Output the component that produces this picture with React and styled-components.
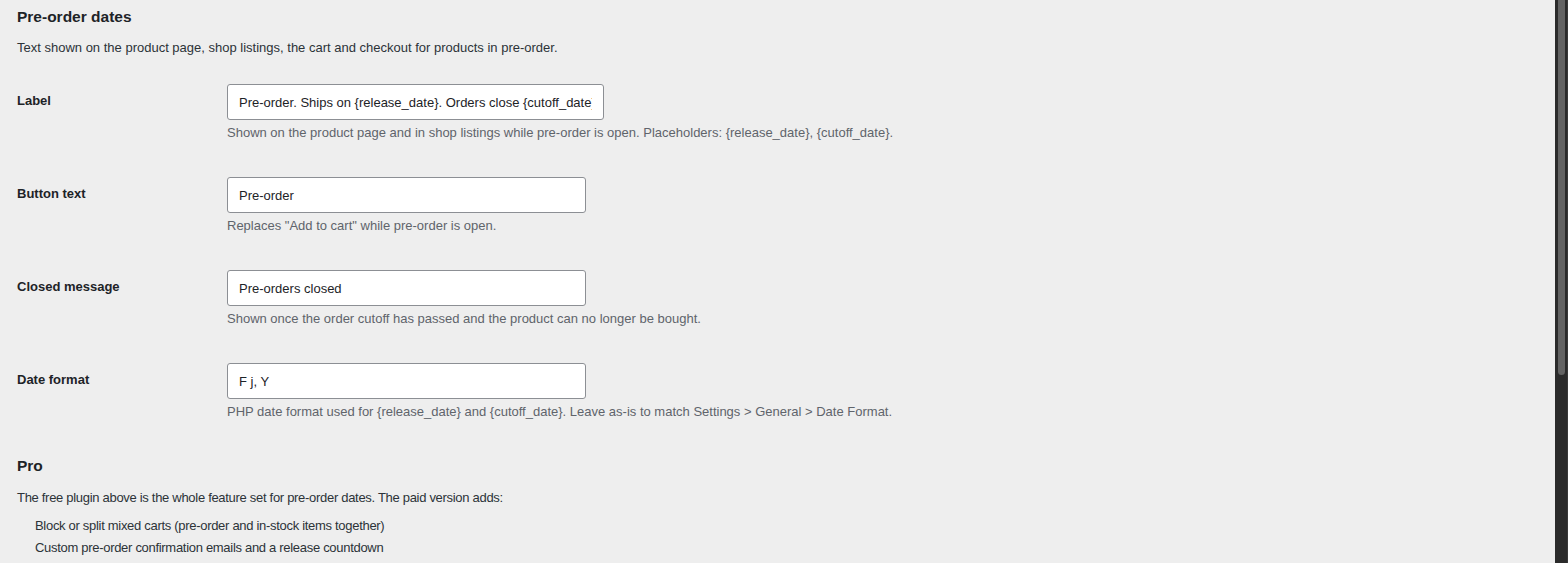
import styled, { createGlobalStyle } from 'styled-components';

const GlobalStyle = createGlobalStyle`
  html, body {
    margin: 0;
    padding: 0;
    background: #eeeeee;
  }
  body {
    font-family: 'Liberation Sans', Arial, sans-serif;
    color: #1d2327;
    font-size: 13px;
  }
`;

const Page = styled.div`
  display: flex;
  height: 100vh;
  overflow: hidden;
`;

const Main = styled.div`
  flex: 1;
  min-width: 0;
  padding: 0 17px;
  overflow: hidden;
`;

const Scrollbar = styled.div`
  width: 13px;
  flex: none;
  background: #2b2b2b;
  border-right: 1px solid #3a3a3a;
  box-sizing: border-box;
`;

const Thumb = styled.div`
  height: 375px;
  margin: 0 2px 0 3px;
  background: #636363;
  border-radius: 0 0 4px 4px;
`;

const Heading = styled.h2`
  font-size: 15.5px;
  line-height: 22px;
  font-weight: 600;
  margin: ${(p) => p.$top || 6}px 0 0;
`;

const Intro = styled.p`
  font-size: 13px;
  line-height: 20px;
  color: #2c3338;
  letter-spacing: ${(p) => p.$tight ? '-0.3px' : 'normal'};
  margin: ${(p) => p.$top || 10}px 0 0;
`;

const FormTable = styled.table`
  border-collapse: collapse;
  margin-top: 11px;
`;

const Th = styled.th`
  width: 200px;
  padding: 22px 10px 0 0;
  text-align: left;
  vertical-align: top;
  font-size: 13px;
  line-height: 20px;
  font-weight: 600;
`;

const Td = styled.td`
  padding: 15px 10px 19px 0;
  vertical-align: top;
`;

const TextInput = styled.input`
  display: block;
  box-sizing: border-box;
  width: ${(p) => p.$width}px;
  height: 36px;
  padding: 0 11px;
  border: 1px solid #8c8f94;
  border-radius: 3px;
  background: #fff;
  font-family: inherit;
  font-size: 13px;
  color: #1d2327;
  outline: none;
`;

const Description = styled.p`
  margin: 3px 0 0;
  font-size: 13px;
  line-height: 20px;
  color: #5f646b;
`;

const FeatureList = styled.ul`
  list-style: none;
  margin: 8px 0 0;
  padding: 0 0 0 18px;
`;

const Feature = styled.li`
  font-size: 13px;
  line-height: 20px;
  color: #2c3338;
  letter-spacing: -0.3px;
  margin-bottom: 2px;
`;

const fields = [
  {
    label: 'Label',
    value: 'Pre-order. Ships on {release_date}. Orders close {cutoff_date}.',
    width: 377,
    help: 'Shown on the product page and in shop listings while pre-order is open. Placeholders: {release_date}, {cutoff_date}.',
  },
  {
    label: 'Button text',
    value: 'Pre-order',
    width: 359,
    help: 'Replaces "Add to cart" while pre-order is open.',
  },
  {
    label: 'Closed message',
    value: 'Pre-orders closed',
    width: 359,
    help: 'Shown once the order cutoff has passed and the product can no longer be bought.',
  },
  {
    label: 'Date format',
    value: 'F j, Y',
    width: 359,
    help: 'PHP date format used for {release_date} and {cutoff_date}. Leave as-is to match Settings > General > Date Format.',
  },
];

export default function App() {
  return (
    <Page>
      <GlobalStyle />
      <Main>
        <Heading>Pre-order dates</Heading>
        <Intro>Text shown on the product page, shop listings, the cart and checkout for products in pre-order.</Intro>
        <FormTable>
          <tbody>
            {fields.map((f) => (
              <tr key={f.label}>
                <Th scope="row">{f.label}</Th>
                <Td>
                  <TextInput type="text" defaultValue={f.value} $width={f.width} />
                  <Description>{f.help}</Description>
                </Td>
              </tr>
            ))}
          </tbody>
        </FormTable>
        <Heading $top={14}>Pro</Heading>
        <Intro $top={11} $tight>The free plugin above is the whole feature set for pre-order dates. The paid version adds:</Intro>
        <FeatureList>
          <Feature>Block or split mixed carts (pre-order and in-stock items together)</Feature>
          <Feature>Custom pre-order confirmation emails and a release countdown</Feature>
        </FeatureList>
      </Main>
      <Scrollbar>
        <Thumb />
      </Scrollbar>
    </Page>
  );
}
